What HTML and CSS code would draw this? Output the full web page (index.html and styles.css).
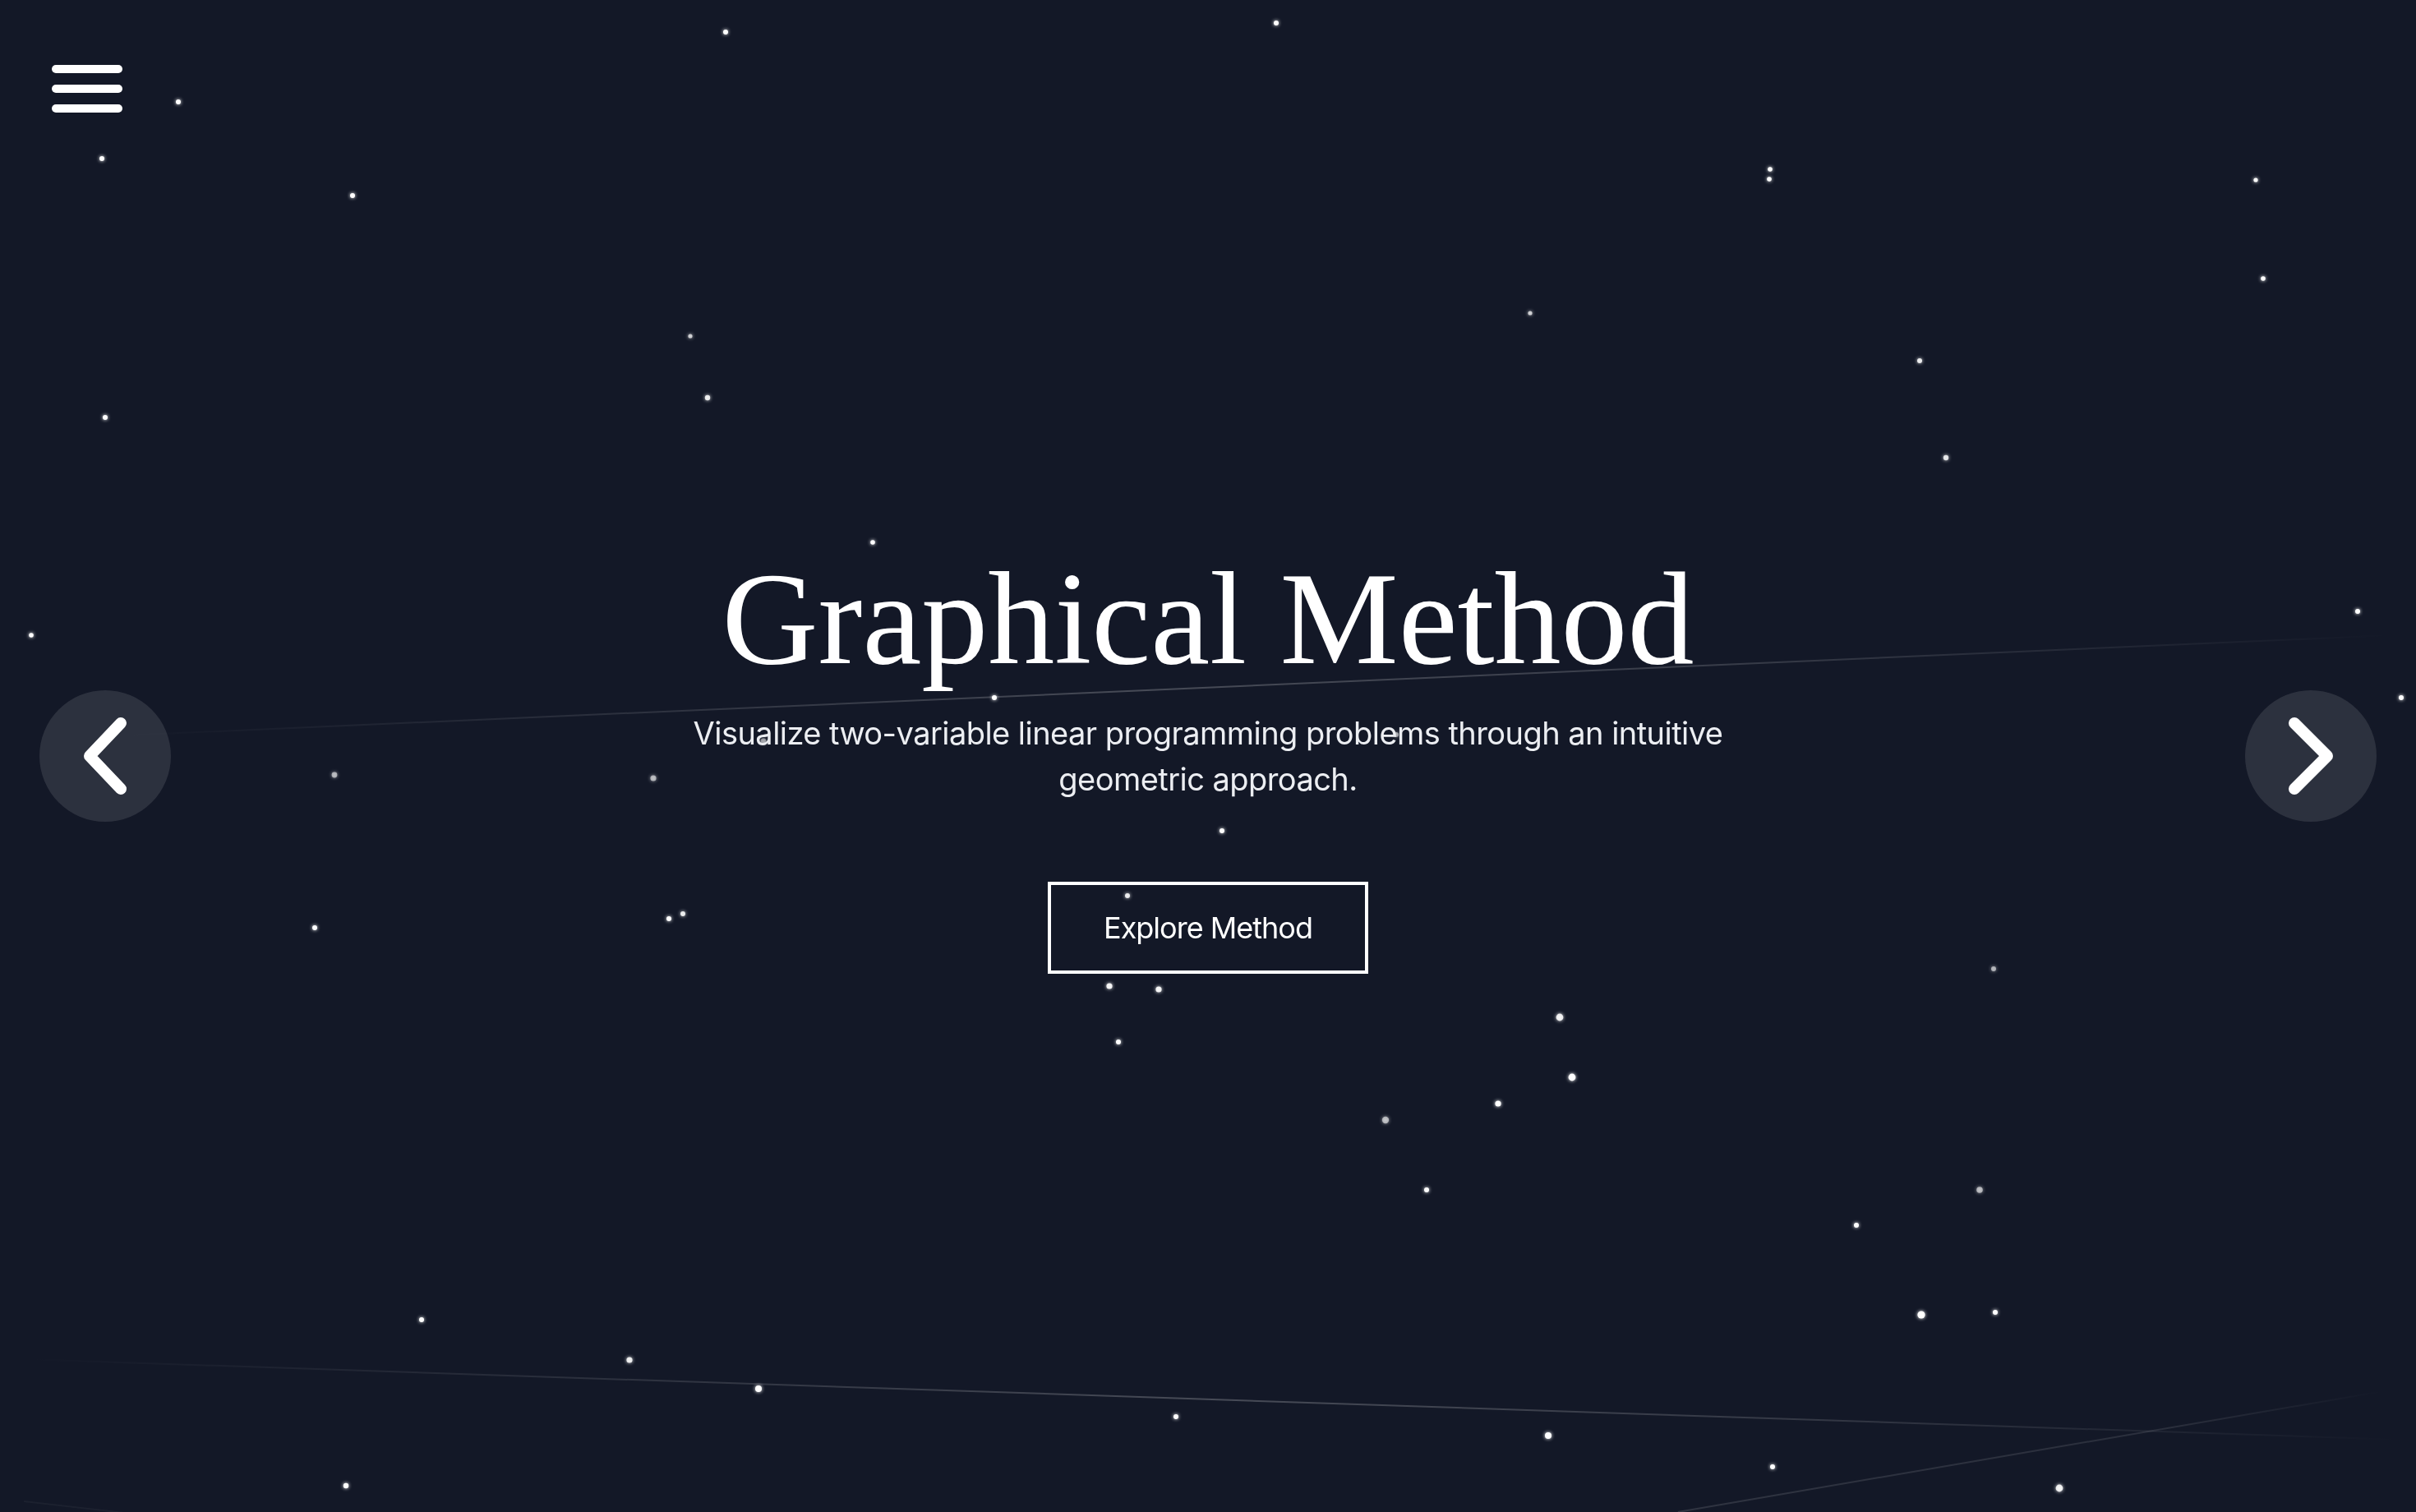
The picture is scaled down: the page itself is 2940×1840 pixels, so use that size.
FILE: index.html
```html
<!DOCTYPE html>
<html lang="en">
<head>
<meta charset="utf-8">
<title>Graphical Method</title>
<link rel="stylesheet" href="styles.css">
</head>
<body>
<div class="hero">
  <svg class="sky" viewBox="0 0 2940 1840" preserveAspectRatio="none" aria-hidden="true">
    <defs>
      <linearGradient id="l1" gradientUnits="userSpaceOnUse" x1="150" y1="895" x2="2910" y2="773">
        <stop offset="0" stop-color="#fff" stop-opacity="0"/>
        <stop offset="0.45" stop-color="#fff" stop-opacity="0.22"/>
        <stop offset="0.7" stop-color="#fff" stop-opacity="0.16"/>
        <stop offset="1" stop-color="#fff" stop-opacity="0"/>
      </linearGradient>
      <linearGradient id="l2" gradientUnits="userSpaceOnUse" x1="30" y1="1654" x2="2920" y2="1752">
        <stop offset="0" stop-color="#fff" stop-opacity="0"/>
        <stop offset="0.5" stop-color="#fff" stop-opacity="0.22"/>
        <stop offset="0.75" stop-color="#fff" stop-opacity="0.14"/>
        <stop offset="1" stop-color="#fff" stop-opacity="0"/>
      </linearGradient>
      <linearGradient id="l3" gradientUnits="userSpaceOnUse" x1="2042" y1="1840" x2="2900" y2="1693">
        <stop offset="0" stop-color="#fff" stop-opacity="0.12"/>
        <stop offset="0.7" stop-color="#fff" stop-opacity="0.1"/>
        <stop offset="1" stop-color="#fff" stop-opacity="0"/>
      </linearGradient>
      <filter id="glow" x="-2" y="-2" width="5" height="5">
        <feGaussianBlur stdDeviation="2.2" result="b"/>
        <feMerge><feMergeNode in="b"/><feMergeNode in="SourceGraphic"/></feMerge>
      </filter>
    </defs>
    <line x1="150" y1="895" x2="2910" y2="773" stroke="url(#l1)" stroke-width="2"/>
    <line x1="30" y1="1654" x2="2920" y2="1752" stroke="url(#l2)" stroke-width="2"/>
    <line x1="2042" y1="1840" x2="2900" y2="1693" stroke="url(#l3)" stroke-width="2"/>
    <line x1="29" y1="1827" x2="160" y2="1842" stroke="#fff" stroke-opacity="0.04" stroke-width="2"/>
    <g fill="#fff" filter="url(#glow)">
      <circle cx="883" cy="39" r="3"/>
      <circle cx="1553" cy="28" r="3"/>
      <circle cx="217" cy="124" r="3"/>
      <circle cx="124" cy="193" r="3"/>
      <circle cx="429" cy="238" r="3"/>
      <circle cx="2154" cy="206" r="2.8"/>
      <circle cx="2153" cy="218" r="2.8"/>
      <circle cx="2745" cy="219" r="2.6"/>
      <circle cx="2754" cy="339" r="2.8"/>
      <circle cx="1862" cy="381" r="2.6" opacity="0.7"/>
      <circle cx="840" cy="409" r="2.6" opacity="0.7"/>
      <circle cx="861" cy="484" r="3.2" opacity="0.85"/>
      <circle cx="2336" cy="439" r="3" opacity="0.85"/>
      <circle cx="128" cy="508" r="3"/>
      <circle cx="2368" cy="557" r="3.2" opacity="0.8"/>
      <circle cx="1062" cy="660" r="2.8"/>
      <circle cx="38" cy="773" r="2.8"/>
      <circle cx="2869" cy="744" r="3"/>
      <circle cx="2922" cy="849" r="3"/>
      <circle cx="1210" cy="849" r="3"/>
      <circle cx="1699" cy="894" r="3" opacity="0.5"/>
      <circle cx="929" cy="902" r="3.5" opacity="0.45"/>
      <circle cx="407" cy="943" r="3.4" opacity="0.55"/>
      <circle cx="795" cy="947" r="3.6" opacity="0.55"/>
      <circle cx="1487" cy="1011" r="3"/>
      <circle cx="1372" cy="1090" r="3" opacity="0.85"/>
      <circle cx="383" cy="1129" r="3"/>
      <circle cx="814" cy="1118" r="3"/>
      <circle cx="831" cy="1112" r="3" opacity="0.85"/>
      <circle cx="1350" cy="1200" r="3.6" opacity="0.9"/>
      <circle cx="1410" cy="1204" r="3.6" opacity="0.9"/>
      <circle cx="2426" cy="1179" r="3" opacity="0.55"/>
      <circle cx="1898" cy="1238" r="4.4" opacity="0.85"/>
      <circle cx="1361" cy="1268" r="3"/>
      <circle cx="1913" cy="1311" r="4.4"/>
      <circle cx="1823" cy="1343" r="3.6"/>
      <circle cx="1686" cy="1363" r="4.2" opacity="0.55"/>
      <circle cx="1736" cy="1448" r="3"/>
      <circle cx="2409" cy="1448" r="3.8" opacity="0.55"/>
      <circle cx="2259" cy="1491" r="3"/>
      <circle cx="2338" cy="1600" r="4.6"/>
      <circle cx="2428" cy="1597" r="3"/>
      <circle cx="513" cy="1606" r="3"/>
      <circle cx="766" cy="1655" r="3.6" opacity="0.85"/>
      <circle cx="923" cy="1690" r="4"/>
      <circle cx="1431" cy="1724" r="3"/>
      <circle cx="1884" cy="1747" r="4"/>
      <circle cx="2157" cy="1785" r="3"/>
      <circle cx="2506" cy="1811" r="4.4" opacity="0.85"/>
      <circle cx="421" cy="1808" r="3.2"/>
    </g>
  </svg>

  <button class="menu-btn" type="button" aria-label="Open menu">
    <svg width="86" height="58" viewBox="0 0 86 58">
      <g stroke="#fff" stroke-width="10" stroke-linecap="round">
        <line x1="5" y1="5" x2="81" y2="5"/>
        <line x1="5" y1="29" x2="81" y2="29"/>
        <line x1="5" y1="53" x2="81" y2="53"/>
      </g>
    </svg>
  </button>

  <button class="nav-btn nav-prev" type="button" aria-label="Previous">
    <svg width="160" height="160" viewBox="0 0 160 160">
      <polyline points="99,40 61,80 99,120" fill="none" stroke="#fff" stroke-width="14" stroke-linecap="round" stroke-linejoin="round"/>
    </svg>
  </button>
  <button class="nav-btn nav-next" type="button" aria-label="Next">
    <svg width="160" height="160" viewBox="0 0 160 160">
      <polyline points="60,40 100,80 60,120" fill="none" stroke="#fff" stroke-width="14" stroke-linecap="round" stroke-linejoin="round"/>
    </svg>
  </button>

  <main class="content">
    <h1 class="title">Graphical Method</h1>
    <p class="subtitle">Visualize two-variable linear programming problems through an intuitive geometric approach.</p>
    <a class="cta" href="#method">Explore Method</a>
  </main>
</div>
</body>
</html>
```

FILE: styles.css
```css
* { box-sizing: border-box; }

html, body {
  margin: 0;
  padding: 0;
  height: 100%;
}

body {
  background: #131827;
  color: #fff;
  font-family: Inter, "Noto Sans", sans-serif;
  overflow: hidden;
}

.hero {
  position: relative;
  width: 100%;
  height: 100vh;
  display: flex;
  align-items: center;
  justify-content: center;
  padding-top: 17px;
}

.sky {
  position: absolute;
  inset: 0;
  width: 100%;
  height: 100%;
}

.menu-btn {
  position: absolute;
  left: 63px;
  top: 79px;
  padding: 0;
  border: 0;
  background: transparent;
  display: block;
  line-height: 0;
  cursor: pointer;
}

.nav-btn {
  position: absolute;
  top: 50%;
  transform: translateY(-50%);
  width: 160px;
  height: 160px;
  padding: 0;
  border: 0;
  border-radius: 50%;
  background: rgba(255, 255, 255, 0.11);
  line-height: 0;
  cursor: pointer;
}

.nav-prev { left: 48px; }
.nav-next { right: 48px; }

.content {
  position: relative;
  display: flex;
  flex-direction: column;
  align-items: center;
  text-align: center;
}

.title {
  margin: 0;
  font-family: "Liberation Serif", "Times New Roman", serif;
  font-weight: 400;
  font-size: 162px;
  line-height: 1;
  color: #fff;
}

.subtitle {
  margin: 30px 0 0;
  max-width: 1344px;
  font-size: 38px;
  letter-spacing: -0.55px;
  line-height: 56px;
  color: #eceef2;
}

.cta {
  margin-top: 97px;
  display: inline-block;
  padding: 24px 64px;
  border: 4px solid #fff;
  color: #fff;
  font-size: 36px;
  letter-spacing: -1px;
  line-height: 56px;
  text-decoration: none;
}
```
